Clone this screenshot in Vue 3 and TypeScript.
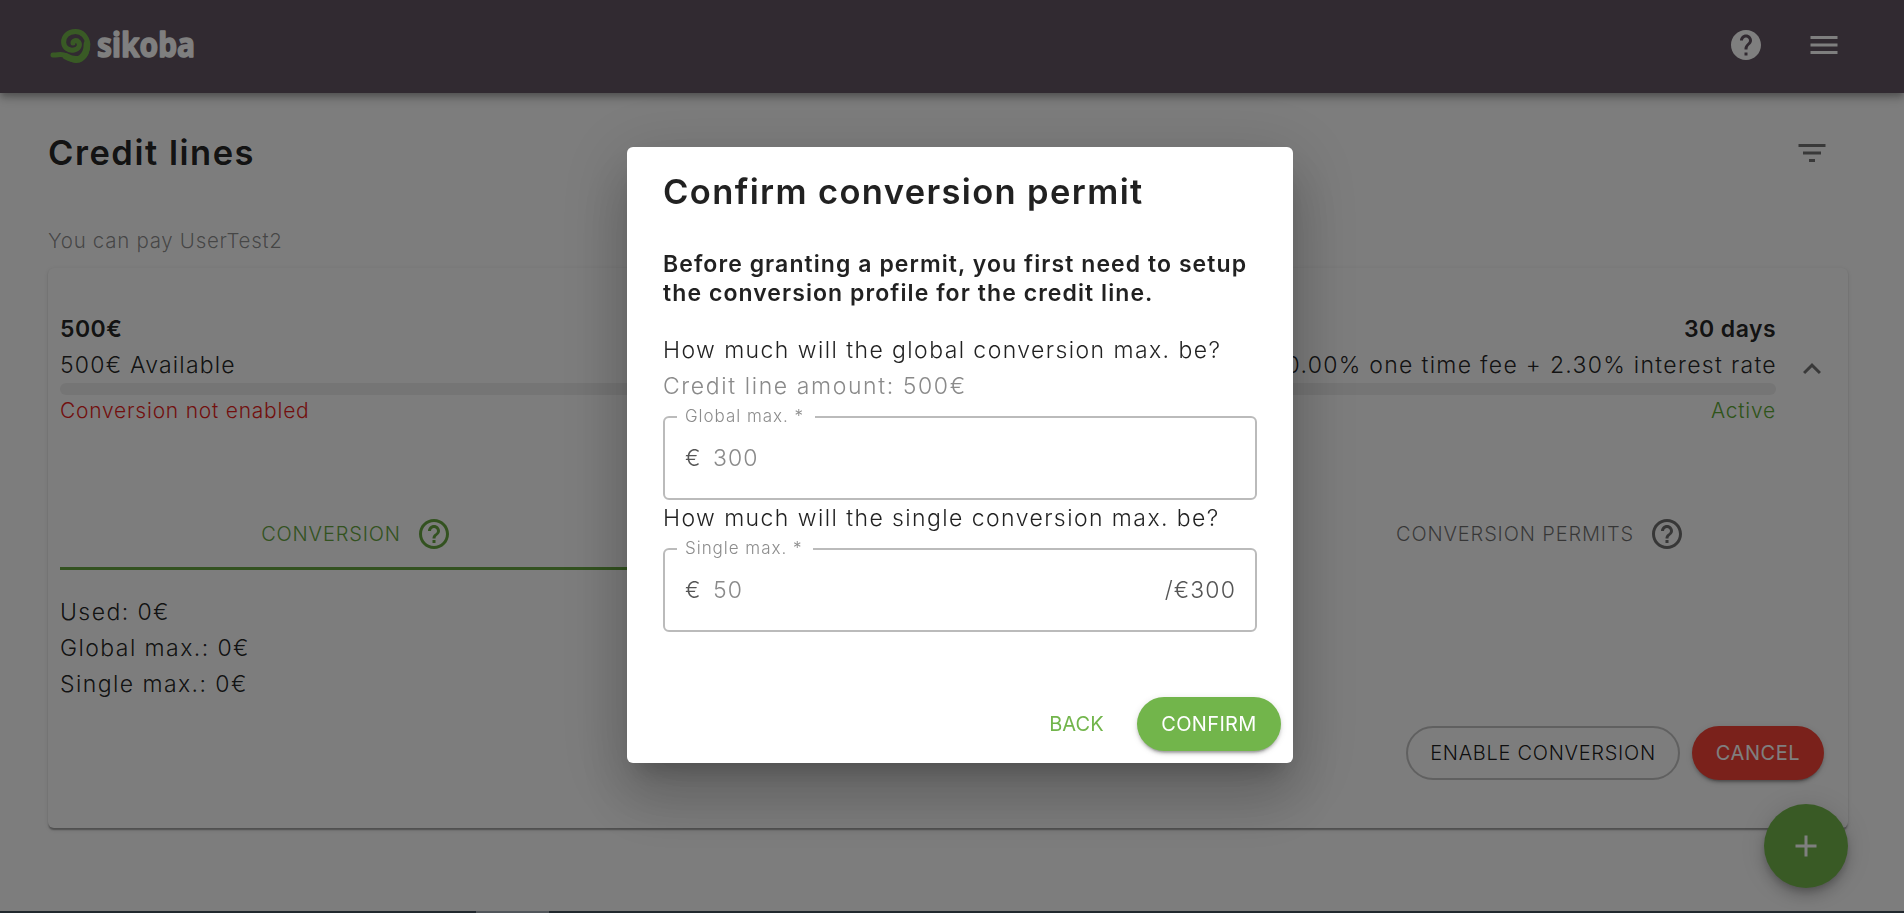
<script setup lang="ts">
import { ref } from 'vue'

interface Tab {
  label: string
  active: boolean
}

const tabs: Tab[] = [
  { label: 'CONVERSION', active: true },
  { label: '', active: false },
  { label: 'CONVERSION PERMITS', active: false },
]
const limits: string[] = ['Used: 0€', 'Global max.: 0€', 'Single max.: 0€']

const globalMax = ref('300')
const singleMax = ref('50')
</script>

<template>
  <div class="page">
    <header class="appbar">
      <svg class="logo" viewBox="0 -8 170 66" width="170" height="66">
        <g fill="none" stroke="#72b54b" stroke-linecap="round" stroke-linejoin="round">
          <path
            stroke-width="5"
            d="M9 33C14 33.400 17 31 22 33.800C27 37 30 39.400 35 38C41.500 36 44.200 28 43.800 22C43 14.500 38 9.500 31.500 9.500C24 9.500 19.300 14.500 19.600 20.500C20 26 25 29 30 28C35 27 36.500 23 34.500 20C32.500 17.500 29 18.500 29 21"
          />
          <path stroke-width="6.500" d="M22 34.400C28 37.500 33 38.500 37 36C41.500 32.500 43 27 42.900 22" />
        </g>
        <text x="53" y="34.500" textLength="98" lengthAdjust="spacingAndGlyphs">sikoba</text>
      </svg>
      <div class="appbar-icons">
        <svg class="icon" viewBox="0 0 24 24">
          <path d="M12 2C6.480 2 2 6.480 2 12s4.480 10 10 10 10-4.480 10-10S17.520 2 12 2zm1 17h-2v-2h2v2zm2.070-7.750l-.9.920C13.450 12.900 13 13.500 13 15h-2v-.5c0-1.100.450-2.100 1.170-2.830l1.240-1.260c.370-.360.590-.860.590-1.410 0-1.100-.9-2-2-2s-2 .9-2 2H8c0-2.210 1.790-4 4-4s4 1.790 4 4c0 .880-.360 1.680-.930 2.250z" />
        </svg>
        <svg class="icon" viewBox="0 0 24 24">
          <path d="M3 18h18v-2H3v2zm0-5h18v-2H3v2zm0-7v2h18V6H3z" />
        </svg>
      </div>
    </header>

    <main class="content">
      <div class="title-row">
        <h1 class="heading page-title">Credit lines</h1>
        <svg class="icon muted-icon" viewBox="0 0 24 24">
          <path d="M10 18h4v-2h-4v2zM3 6v2h18V6H3zm3 7h12v-2H6v2z" />
        </svg>
      </div>
      <p class="pay">You can pay UserTest2</p>

      <section class="card">
        <div class="summary">
          <div class="summary-main">
            <div class="line strong"><span>500€</span><span>30 days</span></div>
            <div class="line body"><span class="available">500€ Available</span><span class="rate">0.00% one time fee + 2.30% interest rate</span></div>
            <div class="bar"></div>
            <div class="line small"><span class="error">Conversion not enabled</span><span class="ok">Active</span></div>
          </div>
          <svg class="icon muted-icon" viewBox="0 0 24 24">
            <path d="M12 8l-6 6 1.410 1.410L12 10.830l4.590 4.580L18 14z" />
          </svg>
        </div>

        <div class="tabs">
          <div v-for="(tab, i) in tabs" :key="i" class="tab" :class="{ active: tab.active }">
            <template v-if="tab.label">
              <span>{{ tab.label }}</span>
              <svg class="icon" viewBox="0 0 24 24">
                <path d="M11 18h2v-2h-2v2zm1-16C6.480 2 2 6.480 2 12s4.480 10 10 10 10-4.480 10-10S17.520 2 12 2zm0 18c-4.410 0-8-3.590-8-8s3.590-8 8-8 8 3.590 8 8-3.590 8-8 8zm0-14c-2.210 0-4 1.790-4 4h2c0-1.100.9-2 2-2s2 .9 2 2c0 2-3 1.750-3 5h2c0-2.250 3-2.500 3-5 0-2.210-1.790-4-4-4z" />
              </svg>
            </template>
          </div>
        </div>

        <div class="limits">
          <div v-for="limit in limits" :key="limit" class="body">{{ limit }}</div>
        </div>

        <div class="card-actions">
          <button class="btn outlined">ENABLE CONVERSION</button>
          <button class="btn danger">CANCEL</button>
        </div>
      </section>
    </main>

    <button class="fab">
      <svg class="icon" viewBox="0 0 24 24"><path d="M19 13h-6v6h-2v-6H5v-2h6V5h2v6h6v2z" /></svg>
    </button>

    <div class="overlay">
      <div class="dialog">
        <h2 class="heading">Confirm conversion permit</h2>
        <p class="intro">Before granting a permit, you first need to setup<br />the conversion profile for the credit line.</p>
        <p class="body question">How much will the global conversion max. be?</p>
        <p class="body hint">Credit line amount: 500€</p>
        <fieldset class="field">
          <legend>Global max. *</legend>
          <div class="field-row"><span class="adorn">€</span><span class="value">{{ globalMax }}</span></div>
        </fieldset>
        <p class="body question">How much will the single conversion max. be?</p>
        <fieldset class="field">
          <legend>Single max. *</legend>
          <div class="field-row">
            <span class="adorn">€</span><span class="value">{{ singleMax }}</span><span class="adorn end">/€{{ globalMax }}</span>
          </div>
        </fieldset>
        <div class="dialog-actions">
          <button class="btn text">BACK</button>
          <button class="btn primary">CONFIRM</button>
        </div>
      </div>
    </div>
    <div class="bottom-strip"><span></span></div>
  </div>
</template>

<style>
html,
body {
  margin: 0;
  height: 100%;
  overflow: hidden;
}
</style>

<style scoped>
.page {
  height: 913px;
  overflow: hidden;
  background: #fafafa;
  font-family: Inter, "Liberation Sans", sans-serif;
  color: rgba(0, 0, 0, 0.87);
}
.page * {
  box-sizing: border-box;
}
p,
h1,
h2 {
  margin: 0;
}
.icon {
  display: block;
  width: 36px;
  height: 36px;
  flex: none;
  fill: currentColor;
}
.muted-icon {
  color: rgba(0, 0, 0, 0.54);
}
.appbar {
  position: relative;
  height: 93px;
  display: flex;
  justify-content: space-between;
  padding: 0 62px 0 44px;
  background: #625562;
  color: #fff;
  box-shadow: 0 3px 6px -1px rgba(0, 0, 0, 0.2), 0 6px 7.500px rgba(0, 0, 0, 0.14), 0 1.500px 15px rgba(0, 0, 0, 0.12);
}
.logo {
  margin-top: 14px;
}
.logo text {
  font: 700 34px "Noto Sans", sans-serif;
  fill: #fff;
  stroke: #fff;
  stroke-width: 1.500px;
  stroke-linejoin: round;
}
.appbar-icons {
  display: flex;
  gap: 42px;
  padding-top: 27px;
}
.content {
  padding: 36px 56px 0 48px;
}
.title-row {
  display: flex;
  justify-content: space-between;
  align-items: center;
  padding-right: 18px;
}
.heading {
  font-size: 34.500px;
  line-height: 48px;
  font-weight: 600;
  letter-spacing: 1.370px;
}
.page-title {
  letter-spacing: 1.530px;
}
.pay {
  margin-top: 49px;
  font-size: 20.500px;
  line-height: 30px;
  font-weight: 300;
  letter-spacing: 0.700px;
  color: rgba(0, 0, 0, 0.46);
}
.card {
  height: 560px;
  margin-top: 12px;
  padding: 43px 12px 0;
  background: #fafafa;
  border-radius: 6px;
  box-shadow: 0 3px 1.500px -1.500px rgba(0, 0, 0, 0.2), 0 1.500px 1.500px rgba(0, 0, 0, 0.14), 0 1.500px 4.500px rgba(0, 0, 0, 0.1);
}
.summary {
  display: flex;
  align-items: center;
  padding-right: 6px;
  gap: 18px;
}
.summary-main {
  flex: 1;
}
.line {
  display: flex;
  justify-content: space-between;
}
.strong {
  font-size: 23px;
  line-height: 36px;
  font-weight: 600;
  letter-spacing: 0.450px;
}
.body {
  font-size: 23px;
  line-height: 36px;
  font-weight: 300;
  letter-spacing: 1.420px;
}
.available {
  letter-spacing: 1.200px;
}
.rate {
  letter-spacing: 1.300px;
  margin-right: -1px;
}
.bar {
  height: 12px;
  margin-bottom: 1px;
  border-radius: 6px;
  background: #eaeaea;
}
.small {
  font-size: 21px;
  line-height: 30px;
  font-weight: 300;
  letter-spacing: 0.770px;
}
.error {
  color: #e51f1c;
}
.ok {
  color: #5da834;
}
.tabs {
  display: grid;
  grid-template-columns: repeat(3, 1fr);
  margin-top: 72px;
}
.tab {
  height: 72px;
  display: flex;
  align-items: center;
  justify-content: center;
  gap: 15px;
  padding-left: 1px;
  font-size: 20px;
  font-weight: 300;
  letter-spacing: 0.850px;
  color: rgba(0, 0, 0, 0.56);
}
.tab.active {
  color: #66a540;
  box-shadow: inset 0 -3px #66a540;
}
.limits {
  margin-top: 24px;
}
.card-actions {
  display: flex;
  justify-content: flex-end;
  gap: 12px;
  margin-top: 24px;
  padding-right: 12px;
}
.btn {
  height: 54px;
  padding: 0;
  border: 0;
  border-radius: 27px;
  background: none;
  font-family: inherit;
  font-size: 20px;
  font-weight: 400;
  color: #fff;
  white-space: nowrap;
}
.btn.outlined {
  width: 274px;
  border: 2px solid rgba(0, 0, 0, 0.23);
  font-weight: 300;
  letter-spacing: 0.710px;
  color: rgba(0, 0, 0, 0.9);
}
.btn.danger {
  width: 132px;
  background: #f44336;
  letter-spacing: 0.590px;
  box-shadow: 0 4.500px 1.500px -3px rgba(0, 0, 0, 0.2), 0 3px 3px rgba(0, 0, 0, 0.14), 0 1.500px 7.500px rgba(0, 0, 0, 0.12);
}
.btn.text {
  width: 87px;
  color: #72b54b;
  letter-spacing: 0.100px;
}
.btn.primary {
  width: 144px;
  background: #72b54b;
  letter-spacing: 0.320px;
  box-shadow: 0 4.500px 1.500px -3px rgba(0, 0, 0, 0.2), 0 3px 3px rgba(0, 0, 0, 0.14), 0 1.500px 7.500px rgba(0, 0, 0, 0.12);
}
.fab {
  position: fixed;
  right: 56px;
  bottom: 25px;
  width: 84px;
  height: 84px;
  display: flex;
  align-items: center;
  justify-content: center;
  padding: 0;
  border: 0;
  border-radius: 50%;
  background: #72b54b;
  color: #fff;
  box-shadow: 0 4.500px 7.500px -1.500px rgba(0, 0, 0, 0.2), 0 9px 15px rgba(0, 0, 0, 0.14), 0 1.500px 27px rgba(0, 0, 0, 0.12);
}
.overlay {
  position: fixed;
  inset: 0 0 2px;
  display: flex;
  align-items: center;
  justify-content: center;
  padding: 0 0 1px 16px;
  background: rgba(0, 0, 0, 0.5);
}
.dialog {
  width: 666px;
  height: 616px;
  display: flex;
  flex-direction: column;
  padding: 21px 36px 0;
  border-radius: 6px;
  background: #fff;
  box-shadow: 0 16.500px 22.500px -10.500px rgba(0, 0, 0, 0.2), 0 36px 57px 4.500px rgba(0, 0, 0, 0.14), 0 13.500px 69px 12px rgba(0, 0, 0, 0.12);
}
.intro {
  margin: 34px 0 24px;
  font-size: 23px;
  line-height: 29px;
  font-weight: 600;
  letter-spacing: 1.070px;
  white-space: nowrap;
}
.question {
  white-space: nowrap;
}
.hint {
  letter-spacing: 1.600px;
  color: #8a8a8a;
}
.field {
  margin: 1px 0 0;
  min-width: 0;
  height: 95px;
  padding: 0 20px 0 12px;
  border: 2px solid #bbb;
  border-radius: 6px;
}
.field legend {
  height: 24px;
  padding: 0 11px 0 8px;
  font-size: 17px;
  line-height: 22px;
  font-weight: 300;
  letter-spacing: 0.970px;
  color: #8c8c8c;
}
.field-row {
  display: flex;
  align-items: center;
  height: 58px;
  padding-left: 8px;
  font-size: 23px;
  font-weight: 300;
  letter-spacing: 1.100px;
}
.adorn {
  width: 28px;
  color: #555;
}
.adorn.end {
  width: auto;
  margin-left: auto;
  margin-right: -1px;
}
.value {
  color: #8a8a8a;
}
.dialog-actions {
  display: flex;
  justify-content: flex-end;
  gap: 17px;
  margin: auto -24px 12px 0;
}
.bottom-strip {
  position: fixed;
  inset: auto 0 0;
  height: 2px;
  background: #21282e;
}
.bottom-strip span {
  display: block;
  width: 73px;
  height: 2px;
  margin-left: 476px;
  background: #51565b;
}
</style>
